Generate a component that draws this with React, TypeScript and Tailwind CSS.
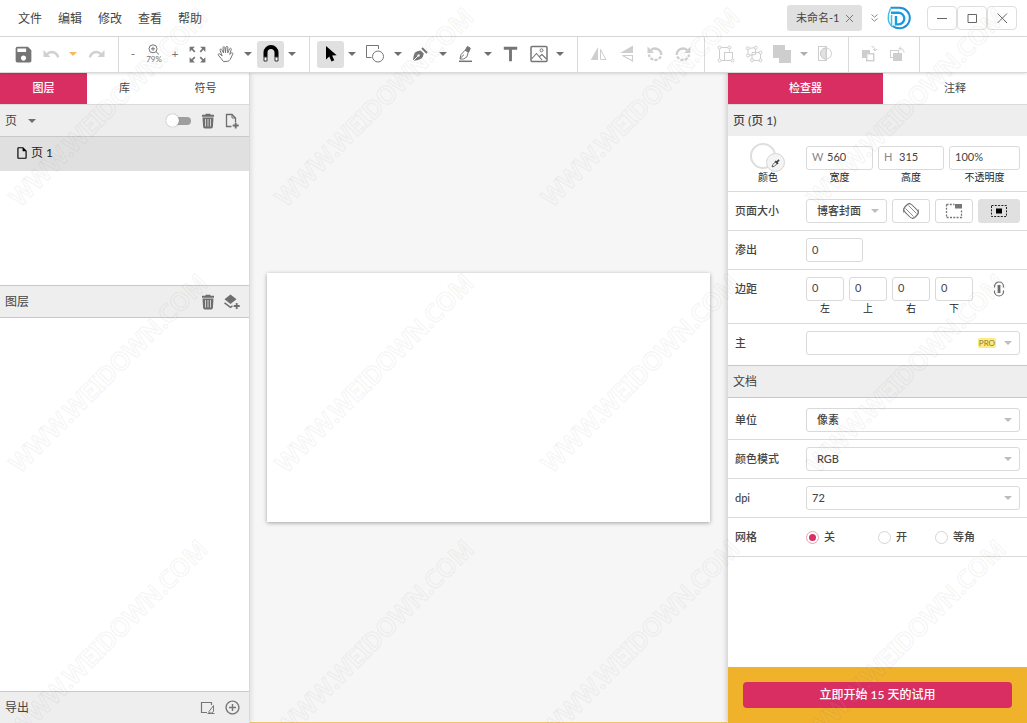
import { useState } from 'react'
import type { ReactNode } from 'react'
import { clsx } from 'clsx'
import {
    MdAddCircleOutline, MdOutlineInsertDriveFile, MdSave, MdTitle, MdZoomOutMap
} from 'react-icons/md'

const menus = ['文件', '编辑', '修改', '查看', '帮助']

const field = 'h-6 rounded-[3px] border border-[#dadada] bg-white text-[11px] text-[#444] outline-none'

/* ===== ICONS ===== */

function Icon({ children, size = 'h-[18px] w-[18px]', className }: {
    children: ReactNode
    size?: string
    className?: string
}) {
    return (
        <svg viewBox="0 0 18 18" fill="none" stroke="currentColor" className={clsx('shrink-0', size, className)}>
            {children}
        </svg>
    )
}

function Caret({ className = 'text-[#6e6e6e]' }: { className?: string }) {
    return (
        <svg viewBox="0 0 8 4" className={clsx('h-1 w-2 shrink-0', className)}>
            <path d="M0 0h8L4 4z" fill="currentColor" />
        </svg>
    )
}

const UndoIcon = ({ flip = false }: { flip?: boolean }) => (
    <Icon className={clsx('text-[#d0d0d0]', flip && '-scale-x-100')}>
        <path d="M1.5 5v7h7z" fill="currentColor" stroke="none" />
        <path d="M4.5 9.5C8.5 5.5 14.5 6.5 16.2 12.3" strokeWidth="2.4" />
    </Icon>
)

const ZoomGlass = () => (
    <svg viewBox="0 0 12 11" fill="none" stroke="currentColor" className="h-[11px] w-3">
        <circle cx="5" cy="4.8" r="4" />
        <path d="M8 7.8l3 2.7M5 2.8v4M3 4.8h4" />
    </svg>
)

const HandIcon = () => (
    <Icon>
        <path
            strokeLinejoin="round"
            strokeLinecap="round"
            d="M6.3 16.3C5 14.2 3 12.3 1.3 10.2c-.6-.9.5-1.9 1.5-1.2l2.3 1.9L3 5.2c-.4-1.2 1.2-1.7 1.7-.6L6.6 8 6 2.6c0-1.2 1.6-1.3 1.8-.1l.7 5.2.5-5.6c.2-1.2 1.8-1 1.8.2l-.1 5.6 1.9-4.1c.5-1 2-.5 1.7.6l-1.6 5 1.5-1.4c.9-.8 2.2.2 1.5 1.2-1.2 1.7-1.5 4-2.6 5.3-.8 1-1.2 1.8-2.4 1.8z"
        />
    </Icon>
)

const MagnetIcon = () => (
    <Icon>
        <path d="M3.5 12V7.5a5.5 5.5 0 0 1 11 0V12" stroke="#000" strokeWidth="4" />
        <path d="M2 12h3v4H2zM13 12h3v4h-3z" fill="#fff" stroke="#333" />
    </Icon>
)

const CursorIcon = () => (
    <Icon>
        <path d="M4 1v13.5l3.3-3 2.2 5 2.8-1.3-2.2-4.7 4.6-.2z" fill="#000" stroke="none" />
    </Icon>
)

const ShapesIcon = () => (
    <Icon>
        <path d="M5.5 12.5H.5V.5h12v3.5" />
        <circle cx="12" cy="11.5" r="5.5" />
    </Icon>
)

const PenIcon = () => (
    <Icon>
        <path
            d="M2 15.8c.4-3.8.9-7.3 2.6-8.6 1.6-1.1 3.4-1.5 5-1.8l3.2 3.2c-.4 1.8-1 3.6-2.3 4.8C9 14.6 5.6 15.2 2 15.8z"
            fill="currentColor"
            stroke="none"
        />
        <path d="M11 3l5 5" strokeWidth="2" />
        <path d="M2 16l5-5" stroke="#fff" />
        <circle cx="7.6" cy="10.4" r="1.2" fill="#fff" stroke="none" />
    </Icon>
)

const PencilIcon = () => (
    <Icon>
        <path d="M3 16.3h13" strokeWidth="1.5" />
        <path d="M4 13.5l1-3.8 4-4.5 3.3 2-1.5 4.8-3.3 2H4z" />
        <path d="M4 13.5l4-3.8" />
        <path d="M9.5 5l1.8-3.5 3 1.6L12.8 7z" fill="currentColor" />
    </Icon>
)

const ImageIcon = () => (
    <Icon>
        <rect x="1" y="1.5" width="16" height="15" rx="1" strokeWidth="1.5" />
        <circle cx="11.5" cy="5.3" r="1.5" />
        <path d="M1.5 14l5-5.5L12 15M9.5 11.5l2.5-2 4.5 4.5" strokeWidth="1.1" />
    </Icon>
)

const FlipHIcon = () => (
    <Icon>
        <path d="M8 2v13H.7z" fill="currentColor" stroke="none" />
        <path d="M10.5 4.5v10h5.4z" />
    </Icon>
)

const FlipVIcon = () => (
    <Icon>
        <path d="M15 .5V8H2z" fill="currentColor" stroke="none" />
        <path d="M14.5 10.5V16l-10-5.5z" strokeWidth="1.2" />
    </Icon>
)

const RotateIcon = ({ flip = false }: { flip?: boolean }) => (
    <Icon className={flip ? '-scale-x-100' : undefined}>
        <path d="M4.8 5.2A6.3 6.3 0 0 1 15.3 10" strokeWidth="2.3" />
        <path d="M1.5 1.5v6.5H8z" fill="currentColor" stroke="none" />
        <path d="M14.8 11.5A6.3 6.3 0 0 1 2.9 9.5" strokeWidth="2.3" strokeDasharray="3.2 1.2" />
    </Icon>
)

const GroupIcon = () => (
    <Icon>
        <path d="M4.3 2.5h7M2.5 4.3v9.4M4.3 15.5H7M12.5 6.5V4.3" />
        <rect x="7.5" y="7.5" width="8" height="8" />
        <g fill="#fff">
            <circle cx="2.5" cy="2.5" r="1.5" />
            <circle cx="12.5" cy="2.5" r="1.5" />
            <circle cx="2.5" cy="15.5" r="1.5" />
            <circle cx="15.5" cy="15.5" r="1.5" />
        </g>
    </Icon>
)

const UngroupIcon = () => (
    <Icon>
        <path d="M3 3.5l7.5-1v7l-7.5 1zM7 7.5h8.5v8H7z" />
        <g fill="#fff">
            <circle cx="2.7" cy="3.3" r="1.5" />
            <circle cx="10.7" cy="2.7" r="1.5" />
            <circle cx="3" cy="10.5" r="1.5" />
            <circle cx="15.5" cy="7.5" r="1.5" />
            <circle cx="15.5" cy="15.3" r="1.5" />
            <circle cx="7" cy="15.3" r="1.5" />
        </g>
    </Icon>
)

const UnionIcon = () => (
    <Icon>
        <path d="M0 0h12v5h6v13H6v-5H0z" fill="currentColor" stroke="none" />
    </Icon>
)

const MaskIcon = () => (
    <Icon>
        <rect x="2.5" y="1.5" width="8" height="14" />
        <circle cx="10" cy="8.5" r="5.5" />
        <path d="M10 3a5.5 5.5 0 0 0 0 11z" fill="currentColor" fillOpacity=".6" />
    </Icon>
)

const ForwardIcon = () => (
    <Icon>
        <path d="M2 5h8v8H2z" fill="currentColor" stroke="none" />
        <rect x="6.7" y="8.7" width="7" height="7" fill="#fff" strokeWidth="1.4" />
        <path d="M11.5 1.5c2 0 3.5 1.3 3.5 4M13 4l2 2 2-2" />
    </Icon>
)

const BackwardIcon = () => (
    <Icon>
        <rect x="2.5" y="5.5" width="8" height="7" />
        <path d="M5 8h9v8H5z" fill="currentColor" stroke="none" />
        <path d="M11.5 3.5c2.5 0 4.5 1 4.5 4M13 1.5l-2 2 2 2" />
    </Icon>
)

const TrashIcon = () => (
    <Icon>
        <path d="M3.5 5.5h11l-.6 9.3a1.8 1.8 0 0 1-1.8 1.7H5.9a1.8 1.8 0 0 1-1.8-1.7z" fill="currentColor" stroke="none" />
        <path d="M3 3.7h12M6.5 2.7h5" strokeWidth="2" />
        <path d="M6.5 7v7.5M9 7v7.5M11.5 7v7.5" stroke="#ddd" strokeWidth=".9" />
    </Icon>
)

const NewPageIcon = () => (
    <Icon>
        <path d="M8.5 14.5h-5v-12h5.5l3.5 3.5v4" strokeWidth="1.3" />
        <path d="M9 2.5V6h3.5" />
        <path d="M12.7 10.5v6M9.7 13.5h6" strokeWidth="1.8" />
    </Icon>
)

const NewLayerIcon = () => (
    <Icon>
        <path d="M7.5 1.5l6 4.8-6 4.7-6-4.7z" fill="currentColor" stroke="none" />
        <path d="M1.5 9.8l6 4.5 2-1.5" strokeWidth="1.5" />
        <path d="M13.7 10v6M10.7 13h6" strokeWidth="1.8" />
    </Icon>
)

const SliceIcon = () => (
    <Icon>
        <path d="M7 13.5H1.5v-10h10V6" strokeWidth="1.2" />
        <path d="M7.5 14.5h7M9 12.5l4.5-6v6l-2 1.5H9z" />
    </Icon>
)

const DropperIcon = () => (
    <Icon size="h-2.5 w-2.5" className="text-[#444]">
        <path d="M2 16l1-4 6-6 3 3-6 6z" strokeWidth="1.5" />
        <path d="M7.5 5.5l5 5M10 8l4.5-4.5" strokeWidth="3.2" />
    </Icon>
)

const OrientationIcon = () => (
    <Icon>
        <rect x="4" y="2" width="10" height="14" rx="3.5" transform="rotate(-45 9 9)" />
        <path d="M3.5 6.5l8 8M6.5 3.5l8 8" strokeWidth=".8" />
        <path d="M1.5 10.5A8 8 0 0 1 8 1.2M16.5 7.5A8 8 0 0 1 10 16.8" strokeWidth=".8" />
    </Icon>
)

const CropCornerIcon = () => (
    <Icon>
        <path d="M1.5 2.5h8M1.5 2.5v13h15V8" strokeDasharray="2 1.3" strokeWidth="1.3" />
        <path d="M10 2h7v4.5h-7z" fill="currentColor" stroke="none" />
    </Icon>
)

const CropCenterIcon = () => (
    <Icon className="text-[#222]">
        <rect x="1.5" y="3.5" width="15" height="11" strokeDasharray="2 1.3" />
        <path d="M6 6.5h6v5H6z" fill="#000" stroke="none" />
    </Icon>
)

const LinkIcon = () => (
    <Icon className="text-[#6a6a6a]">
        <path d="M4.5 7.5v-1a4.5 4.5 0 0 1 9 0v1M4.5 10.5v1a4.5 4.5 0 0 0 9 0v-1" strokeWidth="1.2" />
        <path d="M9 5v8" strokeWidth="2.8" />
    </Icon>
)

const Logo = () => (
    <svg viewBox="0 0 24 24" fill="none" className="h-6 w-6 shrink-0">
        <path d="M3.5 1.7h9a10.3 10.3 0 0 1 0 20.6c-3 0-5-.8-7-2.3" stroke="#1b93d8" strokeWidth="2" />
        <path d="M3.5 2.5C1.5 6.5 1 10 1.3 13.5c.2 2.6 1.4 5 3.2 6.5V9" stroke="#3cbfea" strokeWidth="1.5" />
        <path d="M4 6.8h7.5a5.8 5.8 0 0 1 0 11.6H9V10" stroke="#149fe2" strokeWidth="2.4" />
    </svg>
)

/* ===== TOOLBAR ===== */

function Tool({ label, width = 'w-7', active = false, children }: {
    label: string
    width?: string
    active?: boolean
    children: ReactNode
}) {
    return (
        <button
            aria-label={label}
            className={clsx('flex h-[27px] shrink-0 items-center justify-center', width, active && 'rounded-[3px] bg-[#e0e0e0]')}
        >
            {children}
        </button>
    )
}

function ToolGroup({ className, children }: { className: string; children: ReactNode }) {
    return (
        <div className={clsx('flex h-full shrink-0 items-center border-r border-[#dadada] pb-px', className)}>
            {children}
        </div>
    )
}

function CaretTool({ label, width = 'w-[15px]', tone }: { label: string; width?: string; tone?: string }) {
    return (
        <Tool label={label} width={width}>
            <Caret className={tone} />
        </Tool>
    )
}

function Toolbar() {
    return (
        <div className="z-20 flex h-9 shrink-0 items-center border-b border-[#dadada] bg-white text-[#757575] shadow-sm">
            <ToolGroup className="pl-[9px] pr-1.5">
                <Tool label="保存"><MdSave className="h-[21px] w-[21px]" /></Tool>
                <Tool label="撤销"><UndoIcon /></Tool>
                <CaretTool label="历史" width="w-4" tone="text-[#f5b95f]" />
                <Tool label="重做" width="w-[31px]"><UndoIcon flip /></Tool>
            </ToolGroup>
            <ToolGroup className="pl-[7px] pr-[9px]">
                <Tool label="缩小" width="w-3.5"><span className="text-xs">-</span></Tool>
                <button aria-label="缩放" className="flex w-7 flex-col items-center">
                    <ZoomGlass />
                    <span className="text-[8px] leading-[9px]">79%</span>
                </button>
                <Tool label="放大" width="w-3.5"><span className="text-xs">+</span></Tool>
                <Tool label="适合屏幕" width="w-[30px]"><MdZoomOutMap className="h-[21px] w-[21px]" /></Tool>
                <Tool label="抓手"><HandIcon /></Tool>
                <CaretTool label="抓手选项" />
                <div className="w-0.5" />
                <Tool label="吸附" width="w-[27px]" active><MagnetIcon /></Tool>
                <CaretTool label="吸附选项" width="w-4" />
            </ToolGroup>
            <ToolGroup className="pl-[7px] pr-2.5">
                <Tool label="选择" width="w-[27px]" active><CursorIcon /></Tool>
                <CaretTool label="选择选项" width="w-4" />
                <Tool label="形状" width="w-[30px]"><ShapesIcon /></Tool>
                <CaretTool label="形状选项" />
                <Tool label="钢笔" width="w-[30px]"><PenIcon /></Tool>
                <CaretTool label="钢笔选项" />
                <Tool label="铅笔" width="w-[30px]"><PencilIcon /></Tool>
                <CaretTool label="铅笔选项" />
                <Tool label="文字" width="w-[30px]"><MdTitle className="h-[23px] w-[23px]" /></Tool>
                <Tool label="图片" width="w-[27px]"><ImageIcon /></Tool>
                <CaretTool label="图片选项" />
            </ToolGroup>
            <ToolGroup className="px-[7px] text-[#cecece]">
                <Tool label="水平翻转"><FlipHIcon /></Tool>
                <Tool label="垂直翻转"><FlipVIcon /></Tool>
                <Tool label="向左旋转"><RotateIcon /></Tool>
                <Tool label="向右旋转"><RotateIcon flip /></Tool>
            </ToolGroup>
            <ToolGroup className="pl-[7px] pr-[9px] text-[#cecece]">
                <Tool label="编组"><GroupIcon /></Tool>
                <Tool label="取消编组"><UngroupIcon /></Tool>
                <Tool label="合并"><UnionIcon /></Tool>
                <CaretTool label="合并选项" tone="text-[#b0b0b0]" />
                <Tool label="蒙版"><MaskIcon /></Tool>
            </ToolGroup>
            <ToolGroup className="pl-1.5 pr-2 text-[#cecece]">
                <Tool label="前移"><ForwardIcon /></Tool>
                <Tool label="后移"><BackwardIcon /></Tool>
            </ToolGroup>
        </div>
    )
}

/* ===== TITLE BAR ===== */

function TitleBar() {
    return (
        <header className="flex h-[37px] shrink-0 items-center border-b border-[#dadada] bg-white">
            <nav className="flex gap-4 pl-[18px] pt-0.5 text-xs">
                {menus.map((item) => (
                    <button key={item}>{item}</button>
                ))}
            </nav>
            <div className="ml-auto flex items-center pr-2.5">
                <div className="flex h-[26px] w-[75px] items-center justify-between rounded-[3px] bg-[#e0e0e0] px-[9px] text-[11px]">
                    <span>未命名-1</span>
                    <button aria-label="关闭文档" className="text-[#777]">
                        <svg viewBox="0 0 7 7" stroke="currentColor" className="h-[7px] w-[7px]">
                            <path d="M0 0l7 7M7 0L0 7" />
                        </svg>
                    </button>
                </div>
                <button aria-label="更多文档" className="flex w-[25px] justify-center text-[#888]">
                    <svg viewBox="0 0 7 8" fill="none" stroke="currentColor" className="h-2 w-[7px]">
                        <path d="M.5.5l3 2.7 3-2.7M.5 4.5l3 2.7 3-2.7" />
                    </svg>
                </button>
                <Logo />
                <div className="ml-4 flex text-[#666]">
                    {[
                        { name: '最小化', d: 'M0 5.5h10' },
                        { name: '最大化', d: 'M1 1.5h8.5v8H1z' },
                        { name: '关闭', d: 'M.5.5l9.5 9.5M10 .5L.5 10' },
                    ].map((item) => (
                        <button
                            key={item.name}
                            aria-label={item.name}
                            className="flex h-6 w-[30px] items-center justify-center rounded-[4px] border border-[#dedede]"
                        >
                            <svg viewBox="0 0 11 11" fill="none" stroke="currentColor" className="h-[11px] w-[11px]">
                                <path d={item.d} />
                            </svg>
                        </button>
                    ))}
                </div>
            </div>
        </header>
    )
}

/* ===== LEFT PANEL ===== */

function Tabs({ items }: { items: { name: string; width: string }[] }) {
    const [current, setCurrent] = useState(items[0].name)
    return (
        <div role="tablist" className="flex h-8 shrink-0 border-b border-[#dadada] text-[11px]">
            {items.map((item) => (
                <button
                    key={item.name}
                    role="tab"
                    aria-selected={item.name === current}
                    onClick={() => setCurrent(item.name)}
                    className={clsx(item.width, item.name === current && 'bg-[#d92e62] font-medium text-white')}
                >
                    {item.name}
                </button>
            ))}
        </div>
    )
}

function LeftPanel() {
    return (
        <aside className="z-10 flex w-[250px] shrink-0 flex-col border-r border-[#dadada] bg-white shadow-[0_0_6px_rgba(0,0,0,0.15)]">
            <Tabs
                items={[
                    { name: '图层', width: 'w-[87px]' },
                    { name: '库', width: 'w-[75px]' },
                    { name: '符号', width: 'flex-1' },
                ]}
            />

            <div className="flex h-8 shrink-0 items-center border-b border-[#c8c8c8] bg-[#eeeeee] pl-[5px] pr-2 text-xs">
                <button className="flex items-center gap-[11px]">
                    页
                    <Caret />
                </button>
                <div className="ml-auto flex items-center text-[#6e6e6e]">
                    <input
                        type="checkbox"
                        aria-label="显示所有页"
                        className="relative mr-2 h-2 w-[23px] appearance-none rounded-full bg-[#9e9e9e] before:absolute before:-left-0.5 before:-top-[3px] before:h-[13px] before:w-[13px] before:rounded-full before:bg-white before:shadow-[0_0_1px_rgba(0,0,0,0.5)]"
                    />
                    <button aria-label="删除页"><TrashIcon /></button>
                    <button aria-label="新建页" className="ml-1.5"><NewPageIcon /></button>
                </div>
            </div>
            <ul className="h-[148px] shrink-0 text-xs text-[#222]">
                <li className="flex h-[34px] items-center bg-[#e0e0e0] pb-0.5 pl-[15px]">
                    <MdOutlineInsertDriveFile className="mr-0.5 h-3.5 w-3.5 text-black" />
                    页 1
                </li>
            </ul>

            <div className="flex h-[33px] shrink-0 items-center border-y border-[#c8c8c8] bg-[#eeeeee] pl-[5px] pr-2 text-xs">
                图层
                <div className="ml-auto flex items-center gap-1.5 text-[#6e6e6e]">
                    <button aria-label="删除图层"><TrashIcon /></button>
                    <button aria-label="新建图层"><NewLayerIcon /></button>
                </div>
            </div>
            <div className="flex-1" />

            <div className="flex h-8 shrink-0 items-center border-t border-[#c8c8c8] bg-[#eeeeee] pl-[5px] pr-2 text-xs">
                导出
                <div className="ml-auto flex items-center gap-1.5 text-[#777]">
                    <button aria-label="切片"><SliceIcon /></button>
                    <button aria-label="添加导出"><MdAddCircleOutline className="h-[17px] w-[17px]" /></button>
                </div>
            </div>
        </aside>
    )
}

/* ===== INSPECTOR ===== */

function Row({ label, height = 'h-[39px]', border = true, children }: {
    label: string
    height?: string
    border?: boolean
    children: ReactNode
}) {
    return (
        <div className={clsx('flex shrink-0 items-start px-[7px] pt-[7px]', height, border && 'border-b border-[#dadada]')}>
            <span className="w-[71px] shrink-0 text-[11px] font-medium leading-6">{label}</span>
            <div className="flex min-w-0 flex-1 gap-[5px]">{children}</div>
        </div>
    )
}

function Captioned({ caption, prefix, value, width }: {
    caption: string
    prefix?: string
    value: string
    width: string
}) {
    return (
        <label className={clsx('flex flex-col', width)}>
            <span className={clsx(field, 'flex items-center pb-0.5 pl-[5px]')}>
                {prefix && <span className="w-[15px] shrink-0 text-[#888]">{prefix}</span>}
                <input defaultValue={value} className="w-full min-w-0 bg-transparent outline-none" />
            </span>
            <span className="text-center text-[10px] leading-[14px] text-[#222]">{caption}</span>
        </label>
    )
}

function Dropdown({ label, options, width = 'flex-1', pad = 'pl-2.5', badge }: {
    label: string
    options: string[]
    width?: string
    pad?: string
    badge?: string
}) {
    return (
        <div className={clsx('relative h-6', width)}>
            <select aria-label={label} className={clsx(field, 'block w-full appearance-none font-medium', pad)}>
                {options.map((option) => (
                    <option key={option}>{option}</option>
                ))}
            </select>
            <div className="pointer-events-none absolute inset-y-0 right-2 flex items-center gap-2">
                {badge && (
                    <span className="rounded-[2px] bg-[#fdea80] px-px text-[8px] leading-[10px] text-[#8a7f3d]">{badge}</span>
                )}
                <Caret className="text-[#bdbdbd]" />
            </div>
        </div>
    )
}

function Inspector() {
    const iconButton = 'flex h-6 items-center justify-center rounded-[3px] border'
    return (
        <aside className="z-10 flex w-[300px] shrink-0 flex-col border-l border-[#dadada] bg-white shadow-[0_0_6px_rgba(0,0,0,0.2)]">
            <Tabs
                items={[
                    { name: '检查器', width: 'w-[155px]' },
                    { name: '注释', width: 'flex-1' },
                ]}
            />
            <h2 className="flex h-[31px] shrink-0 items-center bg-[#eeeeee] pl-[5px] text-xs font-medium">页 (页 1)</h2>

            <div className="flex h-14 shrink-0 gap-[5px] border-b border-[#dadada] pr-[7px] pt-[10px]">
                <div className="relative w-[73px] shrink-0">
                    <button aria-label="颜色" className="absolute -top-[3px] left-[22px] h-[26px] w-[26px] rounded-full border-2 border-[#dedede] bg-white" />
                    <button aria-label="吸管" className="absolute left-[38px] top-[7px] flex h-[19px] w-[19px] items-center justify-center rounded-full border border-[#d5d5d5] bg-[#f4f4f4]">
                        <DropperIcon />
                    </button>
                    <span className="absolute left-[30px] top-6 text-[10px] leading-[14px] text-[#222]">颜色</span>
                </div>
                <Captioned caption="宽度" prefix="W" value="560" width="w-[67px]" />
                <Captioned caption="高度" prefix="H" value="315" width="w-[66px]" />
                <Captioned caption="不透明度" value="100%" width="min-w-0 flex-1" />
            </div>

            <Row label="页面大小">
                <Dropdown label="页面大小" options={['博客封面']} width="w-[81px]" />
                <button aria-label="方向" className={clsx(iconButton, 'w-[38px] border-[#dadada] text-[#6e6e6e]')}>
                    <OrientationIcon />
                </button>
                <button aria-label="从角落" className={clsx(iconButton, 'w-[38px] border-[#dadada] text-[#777]')}>
                    <CropCornerIcon />
                </button>
                <button aria-label="从中心" className={clsx(iconButton, 'flex-1 border-[#e0e0e0] bg-[#e0e0e0]')}>
                    <CropCenterIcon />
                </button>
            </Row>
            <Row label="渗出">
                <input aria-label="渗出" defaultValue="0" className={clsx(field, 'w-[57px] pb-0.5 pl-[5px]')} />
            </Row>
            <Row label="边距" height="h-[54px]">
                {['左', '上', '右', '下'].map((side) => (
                    <Captioned key={side} caption={side} value="0" width="w-[38px]" />
                ))}
                <button aria-label="链接边距" className="flex h-6 flex-1 items-center justify-center">
                    <LinkIcon />
                </button>
            </Row>
            <Row label="主" height="h-[41px]" border={false}>
                <Dropdown label="主" options={['']} badge="PRO" />
            </Row>

            <h2 className="flex h-[33px] shrink-0 items-center border-y border-[#c8c8c8] bg-[#eeeeee] pl-[5px] text-xs">文档</h2>

            <div className="pt-[3px]">
                <Row label="单位">
                    <Dropdown label="单位" options={['像素', '毫米', '英寸']} />
                </Row>
                <Row label="颜色模式">
                    <Dropdown label="颜色模式" options={['RGB', 'CMYK']} />
                </Row>
                <Row label="dpi">
                    <Dropdown label="dpi" options={['72', '150', '300']} pad="pl-[5px]" />
                </Row>
                <Row label="网格">
                    {[
                        { name: '关', width: 'w-[67px]' },
                        { name: '开', width: 'w-[52px]' },
                        { name: '等角', width: 'flex-1' },
                    ].map((item, i) => (
                        <label key={item.name} className={clsx('flex h-6 items-center gap-[5px] text-[11px] font-medium', item.width)}>
                            <input
                                type="radio"
                                name="grid"
                                defaultChecked={i === 0}
                                className="h-[13px] w-[13px] appearance-none rounded-full border border-[#d5d5d5] bg-clip-content p-0.5 checked:border-[#e5a3b8] checked:bg-[#d92e62]"
                            />
                            {item.name}
                        </label>
                    ))}
                </Row>
            </div>

            <div className="mt-auto flex bg-[#f0b12b] p-[15px]">
                <button className="h-[26px] w-full rounded-[4px] bg-[#d92e62] text-xs font-medium text-white">
                    立即开始 15 天的试用
                </button>
            </div>
        </aside>
    )
}

/* ===== WATERMARK ===== */

function Watermark() {
    const tile = 266
    const cells = Array.from({ length: 12 }, (_, i) => ({ x: (i % 4) * tile, y: Math.floor(i / 4) * tile }))
    return (
        <svg className="pointer-events-none absolute inset-0 z-30 h-full w-full" aria-hidden="true">
            {cells.map(({ x, y }) => (
                <text
                    key={`${x}-${y}`}
                    transform={`translate(${x + 20} ${y + 208}) rotate(-45)`}
                    className="fill-white/5 stroke-black/4 stroke-2 font-['Noto_Sans'] text-[25px] font-semibold [paint-order:stroke]"
                >
                    WWW.WEIDOWN.COM
                </text>
            ))}
        </svg>
    )
}

export default function App() {
    return (
        <div className="relative flex h-screen flex-col overflow-hidden bg-white font-['Lato','Noto_Sans_CJK_SC',sans-serif] text-[#444]">
            <TitleBar />
            <Toolbar />
            <div className="flex min-h-0 flex-1">
                <LeftPanel />
                <main className="flex min-w-0 flex-1 items-center justify-center border-b border-[#f3c368] bg-[#f6f6f6]">
                    <div className="aspect-[16/9] w-[443px] bg-white shadow-[0_1px_4px_rgba(0,0,0,0.35)]" />
                </main>
                <Inspector />
            </div>
            <Watermark />
        </div>
    )
}
